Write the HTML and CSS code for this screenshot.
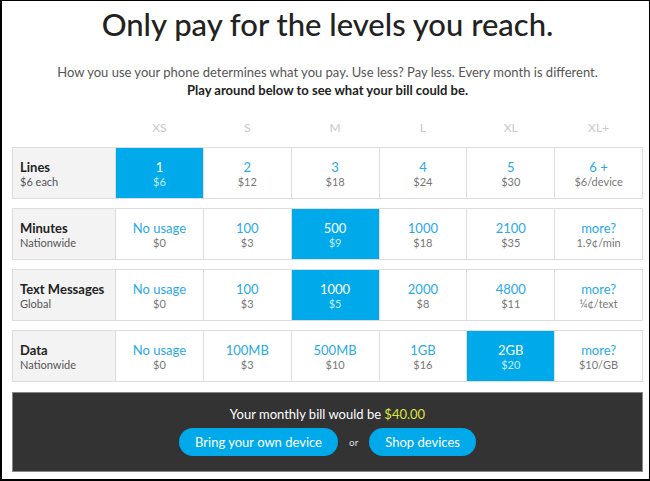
FILE: index.html
```html
<!DOCTYPE html>
<html>
<head>
<meta charset="utf-8">
<link rel="stylesheet" href="styles.css">
</head>
<body>
<div class="frame">
  <h1 class="title">Only pay for the levels you reach.</h1>
  <p class="intro">How you use your phone determines what you pay. Use less? Pay less. Every month is different.<br><strong>Play around below to see what your bill could be.</strong></p>

  <div class="grid heads">
    <span></span><span>XS</span><span>S</span><span>M</span><span>L</span><span>XL</span><span>XL+</span>
  </div>

  <div class="grid row">
    <div class="label"><b>Lines</b><small>$6 each</small></div>
    <div class="cell on"><b>1</b><small>$6</small></div>
    <div class="cell"><b>2</b><small>$12</small></div>
    <div class="cell"><b>3</b><small>$18</small></div>
    <div class="cell"><b>4</b><small>$24</small></div>
    <div class="cell"><b>5</b><small>$30</small></div>
    <div class="cell"><b>6 +</b><small>$6/device</small></div>
  </div>

  <div class="grid row">
    <div class="label"><b>Minutes</b><small>Nationwide</small></div>
    <div class="cell"><b>No usage</b><small>$0</small></div>
    <div class="cell"><b>100</b><small>$3</small></div>
    <div class="cell on"><b>500</b><small>$9</small></div>
    <div class="cell"><b>1000</b><small>$18</small></div>
    <div class="cell"><b>2100</b><small>$35</small></div>
    <div class="cell"><b>more?</b><small>1.9¢/min</small></div>
  </div>

  <div class="grid row">
    <div class="label"><b>Text Messages</b><small>Global</small></div>
    <div class="cell"><b>No usage</b><small>$0</small></div>
    <div class="cell"><b>100</b><small>$3</small></div>
    <div class="cell on"><b>1000</b><small>$5</small></div>
    <div class="cell"><b>2000</b><small>$8</small></div>
    <div class="cell"><b>4800</b><small>$11</small></div>
    <div class="cell"><b>more?</b><small>¼¢/text</small></div>
  </div>

  <div class="grid row">
    <div class="label"><b>Data</b><small>Nationwide</small></div>
    <div class="cell"><b>No usage</b><small>$0</small></div>
    <div class="cell"><b>100MB</b><small>$3</small></div>
    <div class="cell"><b>500MB</b><small>$10</small></div>
    <div class="cell"><b>1GB</b><small>$16</small></div>
    <div class="cell on"><b>2GB</b><small>$20</small></div>
    <div class="cell"><b>more?</b><small>$10/GB</small></div>
  </div>

  <div class="bill">
    <p class="total">Your monthly bill would be <span class="amount">$40.00</span></p>
    <div class="actions">
      <a class="btn">Bring your own device</a>
      <span class="or">or</span>
      <a class="btn">Shop devices</a>
    </div>
  </div>
</div>
</body>
</html>
```

FILE: styles.css
```css
html, body {
  margin: 0;
  padding: 0;
  background: #fff;
}
body {
  font-family: Lato, "Open Sans", sans-serif;
  color: #222;
}
.frame {
  box-sizing: border-box;
  width: 650px;
  height: 481px;
  border-style: solid;
  border-color: #000;
  border-width: 1px 1px 2px 2px;
  padding: 6px 6px 0 10px;
  overflow: hidden;
}
.title {
  margin: 0;
  font-size: 31px;
  line-height: 35px;
  font-weight: 500;
  text-align: center;
  color: #222;
}
.intro {
  margin: 21px 0 0;
  font-size: 13px;
  line-height: 18px;
  text-align: center;
  color: #555;
}
.intro strong {
  color: #222;
  font-weight: 700;
}
.grid {
  display: grid;
  grid-template-columns: 102px repeat(6, 1fr);
  column-gap: 1px;
}
.heads {
  margin-top: 18px;
  height: 20px;
  align-items: center;
  padding: 0 1px;
  font-size: 12px;
  color: #c8c8c8;
  text-align: center;
  margin-bottom: 10px;
}
.row {
  box-sizing: border-box;
  height: 52px;
  border: 1px solid #ddd;
  background: #ddd;
  margin-bottom: 9px;
}
.label, .cell {
  display: flex;
  flex-direction: column;
  justify-content: center;
}
.label {
  background: #f3f3f3;
  padding-left: 7px;
}
.label b {
  font-size: 13px;
  line-height: 16px;
  font-weight: 700;
  color: #222;
}
.label small {
  font-size: 11px;
  line-height: 13px;
  color: #555;
}
.cell {
  background: #fff;
  align-items: center;
  text-align: center;
}
.cell b {
  font-weight: 400;
  font-size: 13px;
  line-height: 16px;
  color: #29a9e6;
}
.cell small {
  font-size: 11px;
  line-height: 13px;
  color: #777;
}
.cell.on {
  background: #00a9e9;
}
.cell.on b {
  color: #fff;
}
.cell.on small {
  color: #c8ecfb;
}
.bill {
  box-sizing: border-box;
  height: 80px;
  margin-top: 10px;
  background: #333;
  border: 1px solid #888;
  padding-top: 12px;
  text-align: center;
}
.total {
  margin: 0;
  font-size: 13px;
  line-height: 18px;
  color: #fff;
}
.amount {
  color: #dde444;
}
.actions {
  margin-top: 5px;
  display: flex;
  justify-content: center;
  align-items: center;
  gap: 11px;
}
.btn {
  display: inline-block;
  height: 28px;
  line-height: 28px;
  padding: 0 16px;
  border-radius: 14px;
  background: #00a9e9;
  color: #fff;
  font-size: 13px;
}
.or {
  font-size: 10px;
  color: #ddd;
}
```
